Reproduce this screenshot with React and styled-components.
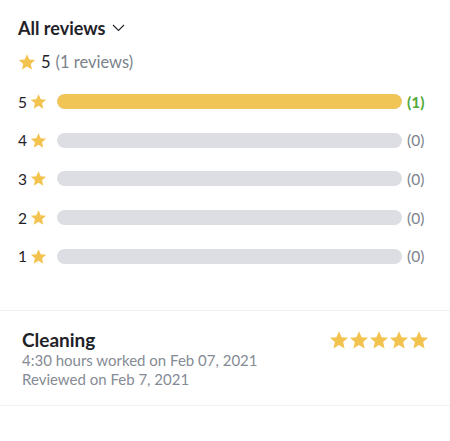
import React from 'react';
import styled, { createGlobalStyle } from "styled-components";

const GlobalStyle = createGlobalStyle`
  body {
    margin: 0;
    background: #fff;
    font-family: Lato, "Open Sans", sans-serif;
    color: #1f2228;
  }
`;

const rows = [
  { stars: 5, count: 1 },
  { stars: 4, count: 0 },
  { stars: 3, count: 0 },
  { stars: 2, count: 0 },
  { stars: 1, count: 0 },
];
const total = 1;

function Star({ size = 16 }) {
  return (
    <svg width={size} height={size} viewBox="0 0 24 24">
      <path
        fill="#f2c34f"
        d="M12 1.6l3.1 7.1 7.7.7-5.8 5.1 1.7 7.6L12 18.1l-6.7 4 1.7-7.6L1.2 9.4l7.7-.7z"
      />
    </svg>
  );
}

function Reviews() {
  return (
    <Page>
      <Summary>
        <Title>
          All reviews
          <svg width="13" height="8" viewBox="0 0 13 8">
            <path d="M1 1l5.5 5.5L12 1" fill="none" stroke="#1f2228" strokeWidth="1.1" />
          </svg>
        </Title>
        <Average>
          <Star size={18} />
          <span>5</span>
          <Muted>(1 reviews)</Muted>
        </Average>
        <Bars>
          {rows.map((r) => (
            <BarRow key={r.stars}>
              <Level>
                {r.stars}
                <Star size={17} />
              </Level>
              <Track>
                <Fill style={{ width: `${(r.count / total) * 100}%` }} />
              </Track>
              <Count $active={r.count > 0}>({r.count})</Count>
            </BarRow>
          ))}
        </Bars>
      </Summary>
      <ReviewCard>
        <div>
          <Job>Cleaning</Job>
          <Meta>4:30 hours worked on Feb 07, 2021</Meta>
          <Meta>Reviewed on Feb 7, 2021</Meta>
        </div>
        <StarRow>
          {[0, 1, 2, 3, 4].map((i) => (
            <Star key={i} size={20} />
          ))}
        </StarRow>
      </ReviewCard>
    </Page>
  );
}

const Page = styled.div`
  width: 450px;
  height: 441px;
  background: #fff;
`;

const Summary = styled.section`
  padding: 17px 18px 0 18px;
  height: 310px;
  box-sizing: border-box;
`;

const Title = styled.div`
  display: flex;
  align-items: center;
  gap: 7px;
  font-size: 18px;
  font-weight: 700;
  height: 22px;
  color: #1f2228;
`;

const Average = styled.div`
  display: flex;
  align-items: center;
  gap: 5px;
  margin-top: 12px;
  font-size: 16.5px;
  height: 22px;
  color: #1f2228;
`;

const Muted = styled.span`
  color: #7b828d;
`;

const Bars = styled.div`
  display: flex;
  flex-direction: column;
  gap: 23.7px;
  margin-top: 21px;
`;

const BarRow = styled.div`
  display: flex;
  align-items: center;
  height: 15px;
`;

const Level = styled.div`
  display: flex;
  align-items: center;
  gap: 3px;
  width: 39px;
  font-size: 15.5px;
  color: #1f2228;
`;

const Track = styled.div`
  flex: 1;
  height: 15px;
  border-radius: 8px;
  background: #dcdee4;
  overflow: hidden;
`;

const Fill = styled.div`
  height: 100%;
  border-radius: 8px;
  background: #f0c555;
`;

const Count = styled.div`
  width: 25px;
  margin-left: 5px;
  font-size: 15.5px;
  font-weight: ${(p) => (p.$active ? 700 : 400)};
  color: ${(p) => (p.$active ? "#52a83a" : "#7b828d")};
`;

const ReviewCard = styled.section`
  display: flex;
  justify-content: space-between;
  align-items: flex-start;
  padding: 18px 22px 0 22px;
  height: 96px;
  box-sizing: border-box;
  border-top: 1px solid #f1f2f4;
  border-bottom: 1px solid #f1f2f4;
`;

const Job = styled.div`
  font-size: 19px;
  font-weight: 700;
  color: #1f2228;
  line-height: 22px;
`;

const Meta = styled.div`
  font-size: 15px;
  color: #858b95;
  line-height: 19px;
`;

const StarRow = styled.div`
  display: flex;
  margin-top: 1px;
  margin-right: -1px;
`;

export default function App() {
  return (
    <>
      <GlobalStyle />
      <Reviews />
    </>
  );
}
